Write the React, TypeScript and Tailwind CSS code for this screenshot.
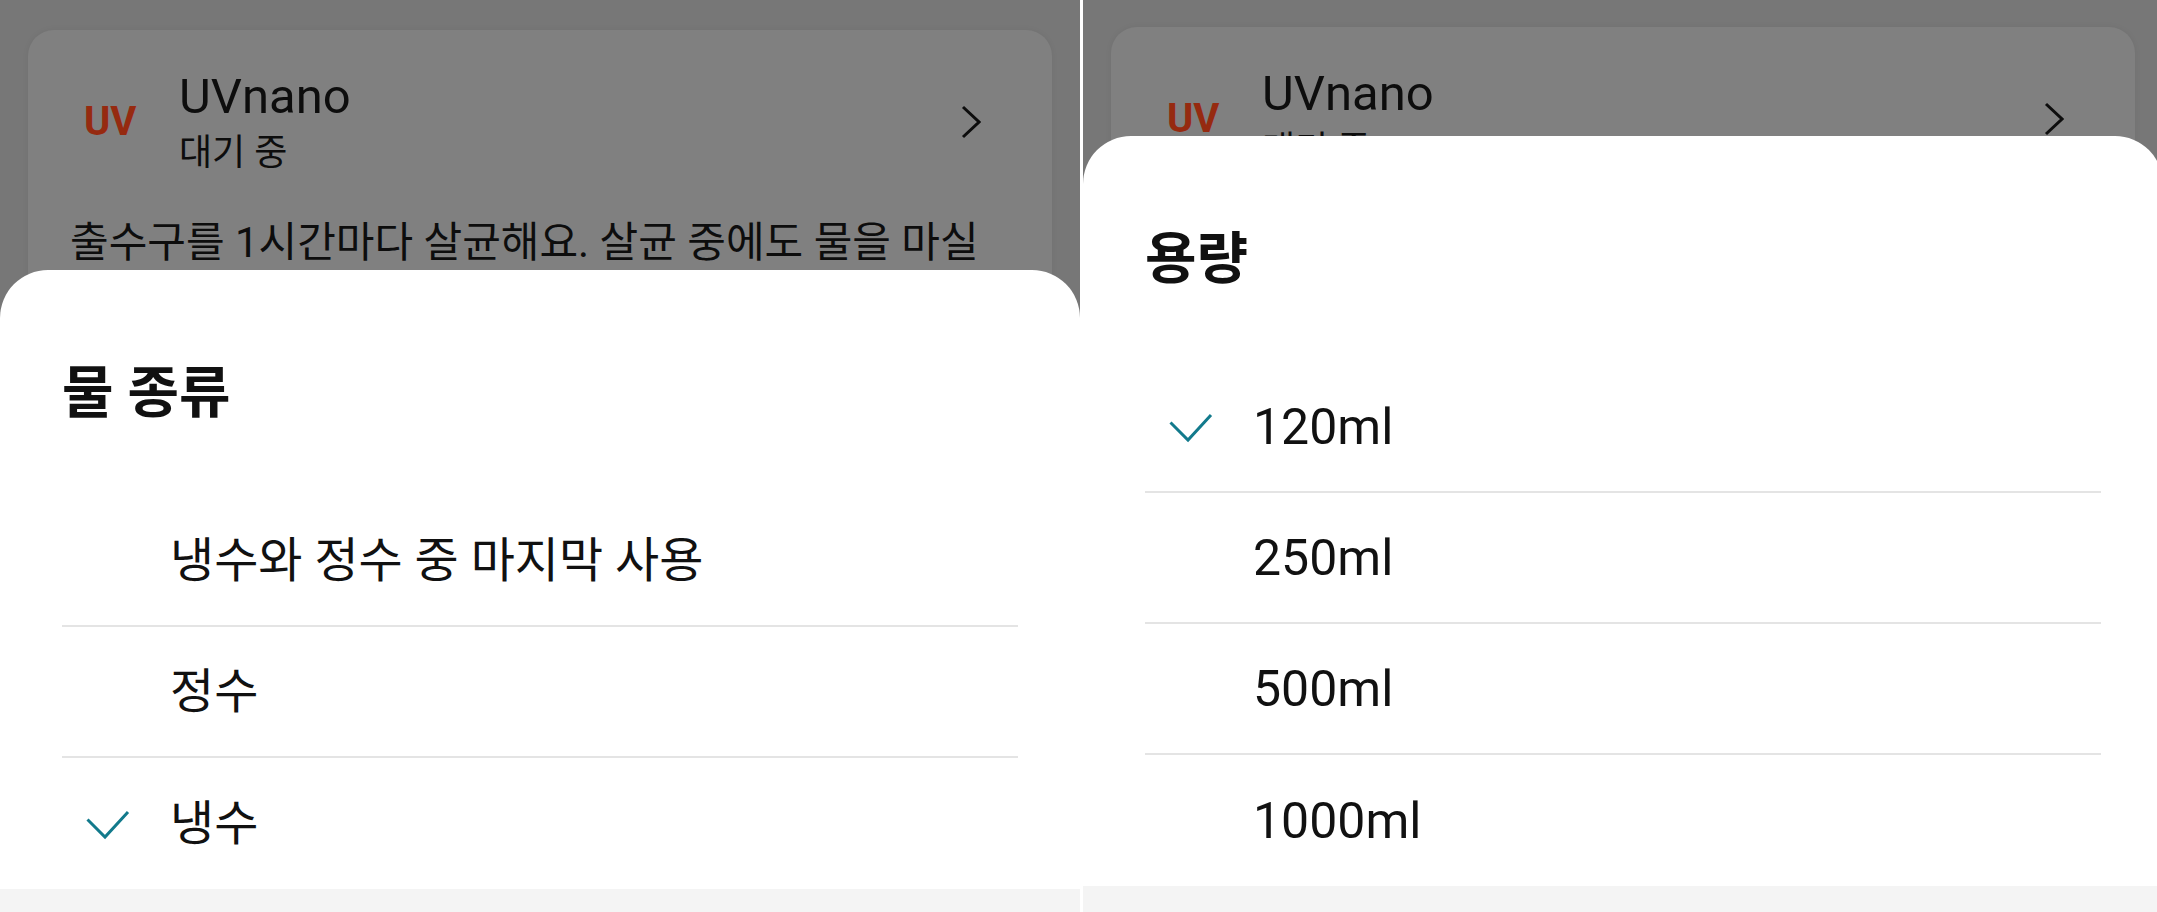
import React from 'react';

function Check() {
  return (
    <svg width="46" height="32" viewBox="0 0 46 32" fill="none">
      <path d="M2.5 11.5 L20 29 L43 4" stroke="#127a8c" strokeWidth="3" />
    </svg>
  );
}

function Chevron() {
  return (
    <svg width="20" height="34" viewBox="0 0 20 34" fill="none">
      <path d="M2 2 L18 17 L2 32" stroke="#0d0d0d" strokeWidth="3" />
    </svg>
  );
}

function Card({ topClass }: { topClass: string }) {
  return (
    <div
      className={`mx-[28px] ${topClass} h-[600px] rounded-[26px] bg-[#808080] pt-[39px] shadow-[0_0_6px_rgba(0,0,0,0.06)]`}
    >
      <div className="flex items-center pl-[56px] pr-[71px]">
        <div className="w-[95px] text-[40px] font-bold leading-none text-[#962a10]">UV</div>
        <div className="flex flex-1 flex-col text-[#0d0d0d]">
          <div className="text-[49px] leading-[56px]">UVnano</div>
          <div className="mt-[7px] text-[36px] leading-[42px]">대기 중</div>
        </div>
        <Chevron />
      </div>
      <p className="mt-[45px] whitespace-nowrap pl-[42px] text-[42px] leading-[48px] text-[#0d0d0d]">
        출수구를 1시간마다 살균해요. 살균 중에도 물을 마실
      </p>
    </div>
  );
}

function Sheet({
  topClass,
  title,
  items,
  selected,
  textClass,
}: {
  topClass: string;
  title: string;
  items: string[];
  selected: number;
  textClass: string;
}) {
  return (
    <div className={`absolute left-0 right-0 bottom-0 flex flex-col ${topClass}`}>
      <div className="rounded-t-[48px] bg-white px-[62px]">
        <div className="h-[226px] pt-[95px]">
          <h2 className="text-[56px] font-bold leading-[56px] text-[#111111]">{title}</h2>
        </div>
        {items.map((it, i) => (
          <div
            key={it}
            className={
              i < items.length - 1
                ? 'flex h-[131px] items-center border-b-2 border-[#e4e4e4]'
                : 'flex h-[131px] items-center'
            }
          >
            <div className="flex w-[108px] items-center pl-[23px]">{i === selected ? <Check /> : null}</div>
            <span className={textClass}>{it}</span>
          </div>
        ))}
      </div>
      <div className="flex-1 bg-[#f4f4f4]" />
    </div>
  );
}

export default function App() {
  return (
    <div className="flex h-[912px] w-[2157px] overflow-hidden bg-white font-['Roboto','Noto_Sans_CJK_KR',sans-serif]">
      <div className="relative h-[912px] w-[1080px] shrink-0 overflow-hidden bg-[#777777]">
        <Card topClass="mt-[30px]" />
        <Sheet
          topClass="top-[270px]"
          title="물 종류"
          items={['냉수와 정수 중 마지막 사용', '정수', '냉수']}
          selected={2}
          textClass="text-[48px] leading-[56px] text-[#111111]"
        />
      </div>
      <div className="w-[3px] shrink-0 bg-white" />
      <div className="h-[912px] flex-1 overflow-hidden">
        <div className="relative h-[912px] w-[1080px] overflow-hidden bg-[#777777]">
          <Card topClass="mt-[27px]" />
          <Sheet
            topClass="top-[136px]"
            title="용량"
            items={['120ml', '250ml', '500ml', '1000ml']}
            selected={0}
            textClass="text-[50px] leading-[56px] text-[#111111]"
          />
        </div>
      </div>
    </div>
  );
}
